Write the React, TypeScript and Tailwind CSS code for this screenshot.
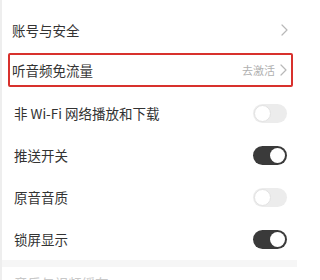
import React from "react";

const Chevron = () => (
  <svg width="7" height="12" viewBox="0 0 7 12" fill="none" className="shrink-0">
    <path d="M1 1l5 5-5 5" stroke="#b8b8b8" strokeWidth="1.2" strokeLinecap="round" strokeLinejoin="round" />
  </svg>
);

const Toggle = ({ on }: { on: boolean }) =>
  on ? (
    <div className="w-[34px] h-[19px] rounded-full bg-[#3a3a3a] flex items-center justify-end pr-[2px] shrink-0">
      <div className="w-[15px] h-[15px] rounded-full bg-white" />
    </div>
  ) : (
    <div className="w-[34px] h-[19px] rounded-full bg-[#ececec] flex items-center pl-[1px] shrink-0">
      <div className="w-[17px] h-[17px] rounded-full bg-white border border-[#e2e2e2]" />
    </div>
  );

const ToggleRow = ({ label, on }: { label: string; on: boolean }) => (
  <div className="h-[42px] flex items-center justify-between pl-[12px] pr-[10px]">
    <span className="text-[13.5px] text-[#333]">{label}</span>
    <Toggle on={on} />
  </div>
);

const App = () => {
  return (
    <div
      className="w-[297px] h-[280px] overflow-hidden bg-white border-l-2 border-[#eeeeee]"
      style={{ fontFamily: '"Noto Sans CJK SC", "Noto Sans", sans-serif' }}
    >
      <div className="h-[10px]" />
      <div className="h-[40px] flex items-center justify-between pl-[10px] pr-[9px]">
        <span className="text-[13.5px] text-[#333]">账号与安全</span>
        <Chevron />
      </div>
      <div className="h-[42px] pt-[3px] pl-[6px] pr-[4px]">
        <div className="h-[34px] border-2 border-[#d8312d] rounded-[2px] flex items-center justify-between pl-[2px] pr-[4px]">
          <span className="text-[13.5px] text-[#333]">听音频免流量</span>
          <div className="flex items-center gap-[5px]">
            <span className="text-[11px] text-[#b0b0b0]">去激活</span>
            <Chevron />
          </div>
        </div>
      </div>
      <ToggleRow label="非 Wi-Fi 网络播放和下载" on={false} />
      <ToggleRow label="推送开关" on={true} />
      <ToggleRow label="原音音质" on={false} />
      <ToggleRow label="锁屏显示" on={true} />
      <div className="h-[7px] bg-[#f6f6f6]" />
      <div className="pt-[7px] pl-[12px] leading-none">
        <span className="text-[13.5px] text-[#c8c8c8]">音乐与视频缓存</span>
      </div>
    </div>
  );
};

export default App;
